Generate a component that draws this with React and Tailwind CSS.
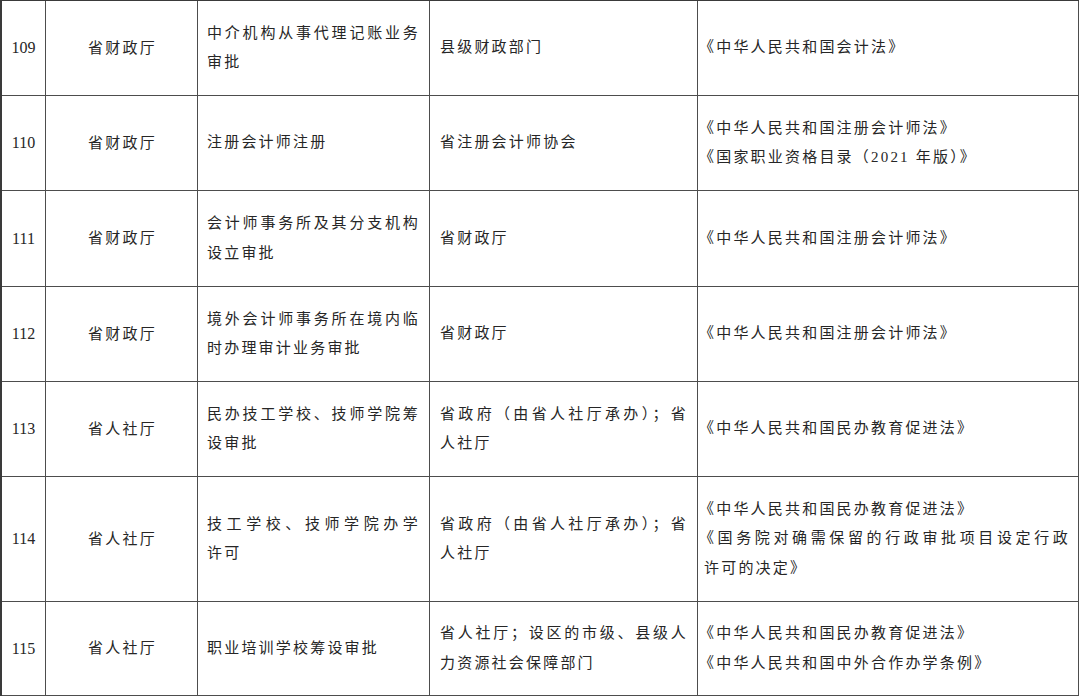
const rows = [
  {
    no: "109",
    dept: "省财政厅",
    h: "h-[95px]",
    item: [["中介机构从事代理记账业务", true], ["审批"]],
    org: [["县级财政部门"]],
    law: [["《中华人民共和国会计法》"]],
  },
  {
    no: "110",
    dept: "省财政厅",
    h: "h-[95px]",
    item: [["注册会计师注册"]],
    org: [["省注册会计师协会"]],
    law: [["《中华人民共和国注册会计师法》"], ["《国家职业资格目录（2021 年版）》"]],
  },
  {
    no: "111",
    dept: "省财政厅",
    h: "h-[96px]",
    item: [["会计师事务所及其分支机构", true], ["设立审批"]],
    org: [["省财政厅"]],
    law: [["《中华人民共和国注册会计师法》"]],
  },
  {
    no: "112",
    dept: "省财政厅",
    h: "h-[95px]",
    item: [["境外会计师事务所在境内临", true], ["时办理审计业务审批"]],
    org: [["省财政厅"]],
    law: [["《中华人民共和国注册会计师法》"]],
  },
  {
    no: "113",
    dept: "省人社厅",
    h: "h-[95px]",
    item: [["民办技工学校、技师学院筹", true], ["设审批"]],
    org: [["省政府（由省人社厅承办）；省", true], ["人社厅"]],
    law: [["《中华人民共和国民办教育促进法》"]],
  },
  {
    no: "114",
    dept: "省人社厅",
    h: "h-[125px]",
    item: [["技工学校、技师学院办学", true], ["许可"]],
    org: [["省政府（由省人社厅承办）；省", true], ["人社厅"]],
    law: [
      ["《中华人民共和国民办教育促进法》"],
      ["《国务院对确需保留的行政审批项目设定行政", true],
      ["许可的决定》"],
    ],
  },
  {
    no: "115",
    dept: "省人社厅",
    h: "h-[94px]",
    item: [["职业培训学校筹设审批"]],
    org: [["省人社厅；设区的市级、县级人", true], ["力资源社会保障部门"]],
    law: [["《中华人民共和国民办教育促进法》"], ["《中华人民共和国中外合作办学条例》"]],
  },
];

// 书名号 sits in the right half of its box, pull it left a little
function Lines({ lines }) {
  return lines.map(([t, j], i) => (
    <div
      key={i}
      className={
        (j ? "text-justify [text-align-last:justify]" : "text-left") +
        (t.startsWith("《") ? " -ml-[5px]" : "")
      }
    >
      {t}
    </div>
  ));
}

const cell =
  "border-r border-b border-[#4d4d4d] flex flex-col justify-center";

export default function App() {
  return (
    <div
      className="w-[1080px] h-[697px] bg-white text-[#262626] overflow-hidden"
      style={{ fontFamily: '"Liberation Serif", "Noto Sans CJK SC", serif' }}
    >
      <div className="border-l-2 border-t border-[#3a3a3a] w-[1079px]">
        {rows.map((r) => (
          <div
            key={r.no}
            className={`grid grid-cols-[44px_152px_232px_268px_381px] ${r.h}`}
          >
            <div className={`${cell} items-center text-[16px]`}>{r.no}</div>
            <div
              className={`${cell} items-center text-[15px] tracking-[2.2px] pl-[2px]`}
            >
              {r.dept}
            </div>
            <div
              className={`${cell} text-[15px] tracking-[2.2px] leading-[29.5px] pl-[9px] pr-[9px]`}
            >
              <Lines lines={r.item} />
            </div>
            <div
              className={`${cell} text-[15px] tracking-[2.2px] leading-[29.5px] pl-[10px] pr-[9px]`}
            >
              <Lines lines={r.org} />
            </div>
            <div
              className={`${cell} text-[15px] tracking-[2.2px] leading-[29.5px] pl-[6px] pr-[8px]`}
            >
              <Lines lines={r.law} />
            </div>
          </div>
        ))}
      </div>
    </div>
  );
}
